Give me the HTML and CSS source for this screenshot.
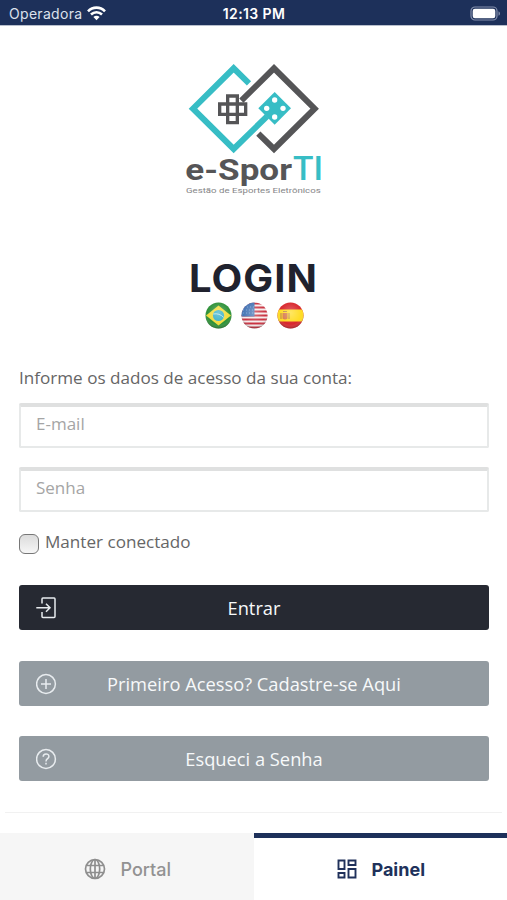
FILE: index.html
```html
<!DOCTYPE html>
<html lang="pt-BR">
<head>
    <meta charset="UTF-8">
    <meta name="viewport" content="width=device-width, initial-scale=1.0">
    <title>e-SporTI - Login</title>
    <link rel="stylesheet" href="styles.css">
</head>
<body>
    <header class="status-bar">
        <div class="carrier">
            <span>Operadora</span>
            <svg width="19" height="15" viewBox="0 0 19 15" fill="none" stroke="#fff" stroke-width="2.6">
                <path d="M1 5.3C5.8.4 13.2.4 18 5.3"/>
                <path d="M4 8.5c3.2-3.1 7.8-3.1 11 0"/>
                <path d="M9.5 14.2 6.4 11c1.8-1.6 4.4-1.6 6.2 0z" fill="#fff" stroke="none"/>
            </svg>
        </div>
        <div class="clock">12:13 PM</div>
        <div class="battery">
            <svg width="31" height="15" viewBox="0 0 31 15">
                <rect x="1" y="1" width="26" height="13" rx="4" fill="none" stroke="#8590ad" stroke-width="1.2"/>
                <rect x="2.7" y="2.7" width="22.6" height="9.6" rx="2.2" fill="#fff"/>
                <path d="M28.5 5.2c2 .9 2 3.7 0 4.6z" fill="#8590ad"/>
            </svg>
        </div>
    </header>

    <main class="content">
        <svg class="logo" width="157" height="150" viewBox="0 0 471 450">
            <g fill="none" stroke-width="18">
                <path d="M222 85 176 40 54 161l122 121 100-98" stroke="#37bdc5"/>
                <path d="m199 137 98-97 122 121-122 121-47-46" stroke="#555557"/>
            </g>
            <path d="M158 123h29v24h25v31h-25v25h-29v-25h-24v-31h24zM158 147h29v31h-29z" fill="none" stroke="#555557" stroke-width="10"/>
            <path d="m299 111 49 49-49 49-49-49z" fill="#37bdc5"/>
            <g fill="#fff">
                <circle cx="299" cy="135" r="8"/>
                <circle cx="275" cy="160" r="8"/>
                <circle cx="324" cy="160" r="8"/>
                <circle cx="299" cy="186" r="8"/>
            </g>
            <text class="logo-name" x="31" y="374" textLength="320" lengthAdjust="spacingAndGlyphs">e-Spor</text>
            <text class="logo-ti" x="354" y="374" textLength="90" lengthAdjust="spacingAndGlyphs">TI</text>
            <text class="logo-tagline" x="33" y="414" textLength="404" lengthAdjust="spacingAndGlyphs">Gestão de Esportes Eletrônicos</text>
        </svg>

        <h1 class="title">LOGIN</h1>
        <div class="languages">
            <!-- Brasil -->
            <svg width="27" height="27" viewBox="0 0 27 27">
                <defs>
                    <clipPath id="round"><circle cx="13.5" cy="13.5" r="13"/></clipPath>
                    <radialGradient id="gloss" cx=".5" cy=".4" r=".6">
                        <stop offset="0" stop-color="#fff" stop-opacity=".3"/>
                        <stop offset=".7" stop-color="#fff" stop-opacity="0"/>
                        <stop offset="1" stop-color="#000" stop-opacity=".35"/>
                    </radialGradient>
                </defs>
                <g clip-path="url(#round)">
                    <path d="M0 0h27v27H0z" fill="#2e9138"/>
                    <path d="M13.5 3.5 26 13.5l-12.5 10L1 13.5z" fill="#f2dc3c"/>
                    <circle cx="13.5" cy="13.5" r="5.6" fill="#36afc8"/>
                    <path d="M8.2 12c4-.8 7.8.5 10.5 3.4" fill="none" stroke="#b5e4e8" stroke-width="1"/>
                    <path d="M0 0h27v27H0z" fill="url(#gloss)"/>
                </g>
            </svg>
            <!-- Estados Unidos -->
            <svg width="27" height="27" viewBox="0 0 27 27">
                <g clip-path="url(#round)">
                    <path d="M0 0h27v27H0z" fill="#f5ecec"/>
                    <path d="M0 1.5h27M0 5.500h27M0 9.500h27M0 13.500h27M0 17.500h27M0 21.500h27M0 25.500h27" stroke="#c9303f" stroke-width="2"/>
                    <path d="M0 0h13.500v14.500H0z" fill="#4776b5"/>
                    <path d="M3 5h10M2 8h11M2 11h11" stroke="#7fa3d2" stroke-width="1" stroke-dasharray="1 2"/>
                    <path d="M0 0h27v27H0z" fill="url(#gloss)"/>
                </g>
            </svg>
            <!-- España -->
            <svg width="27" height="27" viewBox="0 0 27 27">
                <g clip-path="url(#round)">
                    <path d="M0 0h27v27H0z" fill="#d8262c"/>
                    <path d="M0 7.5h27v12H0z" fill="#ffdc22"/>
                    <path d="M5.500 11h5v5.500q-2.500 2-5 0z" fill="#d77a4c"/>
                    <path d="M4 11v6M12 11v6M6 9.500h4" stroke="#c08a48" stroke-width="1.2"/>
                    <path d="M0 0h27v27H0z" fill="url(#gloss)"/>
                </g>
            </svg>
        </div>

        <form class="login-form">
            <p class="intro">Informe os dados de acesso da sua conta:</p>
            <input class="field" type="email" placeholder="E-mail">
            <input class="field" type="password" placeholder="Senha">
            <label class="remember">
                <input class="checkbox" type="checkbox">
                <span>Manter conectado</span>
            </label>
            <button class="btn btn-dark" type="button">
                <svg class="btn-icon" width="22" height="22" viewBox="0 0 22 22">
                    <path d="M6 6.500V2q0-.9.9-.9h11.200q.9 0 .9.9v17.500q0 .9-.9.9H6.900q-.9 0-.9-.9V15M.3 10.700h13.200M10 6.700l4 4-4 4"/>
                </svg>
                Entrar
            </button>
            <button class="btn" type="button">
                <svg class="btn-icon" width="22" height="22" viewBox="0 0 22 22">
                    <circle cx="10" cy="11" r="9.400"/>
                    <path d="M10 6v10M5 11h10"/>
                </svg>
                Primeiro Acesso? Cadastre-se Aqui
            </button>
            <button class="btn" type="button">
                <svg class="btn-icon" width="22" height="22" viewBox="0 0 22 22">
                    <circle cx="10" cy="11" r="9.400"/>
                    <path d="M7.200 8.700c0-3.700 5.700-3.700 5.700-.3 0 2.300-2.900 2.300-2.900 5M10 14.700v1.800"/>
                </svg>
                Esqueci a Senha
            </button>
        </form>
    </main>

    <nav class="tabs">
        <a class="tab">
            <svg width="22" height="22" viewBox="0 0 22 22" fill="none" stroke="#8e8e8e" stroke-width="1.700">
                <circle cx="11" cy="11" r="9.500"/>
                <ellipse cx="11" cy="11" rx="4.700" ry="9.500"/>
                <path d="M11 1.500v19M2.500 7.500h17M2.500 14.500h17"/>
            </svg>
            <span>Portal</span>
        </a>
        <a class="tab active">
            <svg width="20" height="20" viewBox="0 0 20 20" fill="none" stroke="#20315b" stroke-width="1.900">
                <path d="M1.500 1.500h6v8.500h-6zM11.500 1.500h7v4.500h-7zM1.500 14h6v4.500h-6zM11.500 10h7v8.500h-7z"/>
            </svg>
            <span>Painel</span>
        </a>
    </nav>
</body>
</html>
```
FILE: styles.css
```css
* {
    box-sizing: border-box;
}
body {
    margin: 0;
    height: 100vh;
    display: flex;
    flex-direction: column;
    overflow: hidden;
    background-color: #fff;
    font-family: "Open Sans", sans-serif;
    color: #666;
}
.status-bar {
    height: 25px;
    flex: none;
    display: grid;
    grid-template-columns: 1fr auto 1fr;
    align-items: center;
    padding: 2px 6px 0 7px;
    background-color: #1d305a;
    box-shadow: 0 1px 0 #b8bfcd;
    color: #fff;
    font-family: Inter, sans-serif;
    font-size: 14px;
}
.carrier {
    display: flex;
    align-items: center;
    gap: 5px;
    padding-left: 2px;
    color: #dce1ec;
    letter-spacing: 0.3px;
}
.clock {
    font-weight: 600;
    letter-spacing: 0.4px;
}
.battery {
    display: flex;
    justify-content: flex-end;
}
.content {
    flex: 1;
    display: flex;
    flex-direction: column;
    align-items: center;
    padding-top: 30px;
}
.logo {
    flex: none;
}
.logo-name,
.logo-ti,
.logo-tagline {
    font-family: Roboto, sans-serif;
    fill: #555557;
}
.logo-name {
    font-size: 90px;
    font-weight: 700;
}
.logo-ti {
    font-size: 101px;
    font-weight: 500;
    fill: #37bdc5;
}
.logo-tagline {
    font-size: 23px;
    fill: #858587;
}
.title {
    margin: 50px 0 0;
    height: 46px;
    line-height: 46px;
    font-family: Inter, sans-serif;
    font-size: 38px;
    font-weight: 700;
    letter-spacing: 1px;
    transform: scaleX(1.05);
    color: #20222e;
}
.languages {
    display: flex;
    gap: 9px;
    margin: 1px 0 0 1px;
}
.login-form {
    align-self: stretch;
    display: flex;
    flex-direction: column;
    margin: 36px 5px 0;
    padding: 0 13px 31px 14px;
    border-bottom: 1px solid #f1f1f1;
}
.intro {
    margin: 0 0 12px;
    line-height: 26px;
    font-size: 17.1px;
}
.field {
    height: 45px;
    margin-bottom: 19px;
    padding: 0 15px 7px;
    border: 2px solid #e7e9e9;
    border-top: 4px solid #dfe0e0;
    border-radius: 2px;
    background-color: #fff;
    font-family: inherit;
    font-size: 17px;
}
.field::placeholder {
    color: #a5a5a5;
}
.remember {
    display: flex;
    align-items: center;
    gap: 6px;
    height: 26px;
    margin: -3px 0 31px;
    font-size: 17.1px;
}
.checkbox {
    appearance: none;
    width: 20px;
    height: 20px;
    margin: 5px 0 0;
    border: 1.5px solid #777;
    border-radius: 6px;
    background: linear-gradient(#dcdcdc, #f6f6f6);
}
.btn {
    position: relative;
    height: 45px;
    margin-bottom: 30.6px;
    padding: 0;
    border: none;
    border-radius: 3px;
    background-color: #939ba1;
    color: #f7f9fa;
    font-family: inherit;
    font-size: 18.3px;
}
.btn:last-child {
    margin-bottom: 0;
}
.btn-dark {
    background-color: #262932;
}
.btn-icon {
    position: absolute;
    left: 17px;
    top: 12px;
    fill: none;
    stroke: #e8ecef;
    stroke-width: 1.5;
}
.tabs {
    flex: none;
    height: 67px;
    display: grid;
    grid-template-columns: 1fr 1fr;
    font-family: Inter, sans-serif;
    font-size: 18px;
    font-weight: 500;
}
.tab {
    display: flex;
    align-items: center;
    justify-content: center;
    gap: 14px;
    padding: 5px 0 0 2px;
    background-color: #f6f6f6;
    color: #929292;
}
.tab.active {
    padding-top: 0;
    border-top: 5px solid #1d305a;
    background-color: #fff;
    color: #20315b;
    font-weight: 700;
}
```
